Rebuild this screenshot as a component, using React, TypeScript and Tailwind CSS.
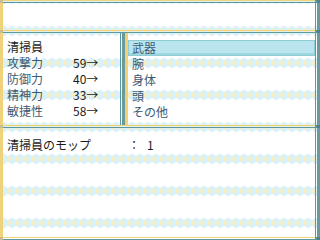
const stats = [
  { label: '攻撃力', value: '59→' },
  { label: '防御力', value: '40→' },
  { label: '精神力', value: '33→' },
  { label: '敏捷性', value: '58→' },
]

const slots = ['武器', '腕', '身体', '頭', 'その他']

function HLine() {
  return (
    <div className="flex h-[3px] shrink-0">
      <div className="w-[3px] bg-[#c9bd92]" />
      <div className="flex-1 flex flex-col">
        <div className="h-[1px] bg-[#efd27a]" />
        <div className="h-[1px]" />
        <div className="h-[1px] bg-[#5a98a2]" />
      </div>
      <div className="w-[2px] bg-[#5a98a2]" />
      <div className="w-[3px] bg-[#4f8287]" />
    </div>
  )
}

function LeftEdge() {
  return <div className="w-[3px] shrink-0 bg-[#efd27a]" />
}

function RightEdge() {
  return (
    <div className="flex shrink-0">
      <div className="w-[1px] bg-[#5a98a2]" />
      <div className="w-[1px]" />
      <div className="w-[3px] bg-[#6b9a9c]" />
    </div>
  )
}

export default function App() {
  return (
    <div className="w-[320px] h-[240px] overflow-hidden flex flex-col bg-white bg-[image:radial-gradient(circle_at_0_16px,#f9efc2_2.5px,transparent_3px),radial-gradient(circle_at_4px_16px,#d9f1f9_4.5px,transparent_5px),linear-gradient(transparent_13px,#e3f5fb_13px,#e3f5fb_19px,transparent_19px)] bg-[length:8px_32px] bg-[position:0_-17px] font-['Noto_Sans_CJK_JP',sans-serif] text-[12px] leading-[16px]">
      <HLine />
      <div className="flex h-[27px] shrink-0">
        <LeftEdge />
        <div className="flex-1" />
        <RightEdge />
      </div>
      <HLine />

      <div className="flex h-[92px] shrink-0">
        {/* status column */}
        <div className="flex w-[125px] shrink-0">
          <LeftEdge />
          <div className="flex-1 pt-[6px] pl-[4px]">
            <div className="text-[#1c1c1c]">清掃員</div>
            {stats.map((s) => (
              <div key={s.label} className="flex">
                <span className="w-[66px] text-[#3b5a74]">{s.label}</span>
                <span className="text-[#1c1c1c]">{s.value}</span>
              </div>
            ))}
          </div>
          <RightEdge />
        </div>

        {/* equipment slots */}
        <div className="flex flex-1">
          <LeftEdge />
          <div className="flex-1 pt-[7px]">
            {slots.map((slot, i) => (
              <div
                key={slot}
                className={
                  i === 0
                    ? 'h-[16px] pl-[3px] border border-[#8ecdd6] bg-[#bae5ee] shadow-[inset_0_-2px_0_#a2d6de] text-[#3b5a74] leading-[14px]'
                    : 'h-[16px] pl-[4px] text-[#3b5a74]'
                }
              >
                {slot}
              </div>
            ))}
          </div>
          <RightEdge />
        </div>
      </div>
      <HLine />

      <div className="flex h-[109px] shrink-0">
        <LeftEdge />
        <div className="flex-1 pt-[9px] pl-[4px]">
          <div className="flex text-[#1c1c1c]">
            <span className="w-[121px]">清掃員のモップ</span>
            <span className="w-[19px]">：</span>
            <span>1</span>
          </div>
        </div>
        <RightEdge />
      </div>
      <HLine />
    </div>
  )
}
